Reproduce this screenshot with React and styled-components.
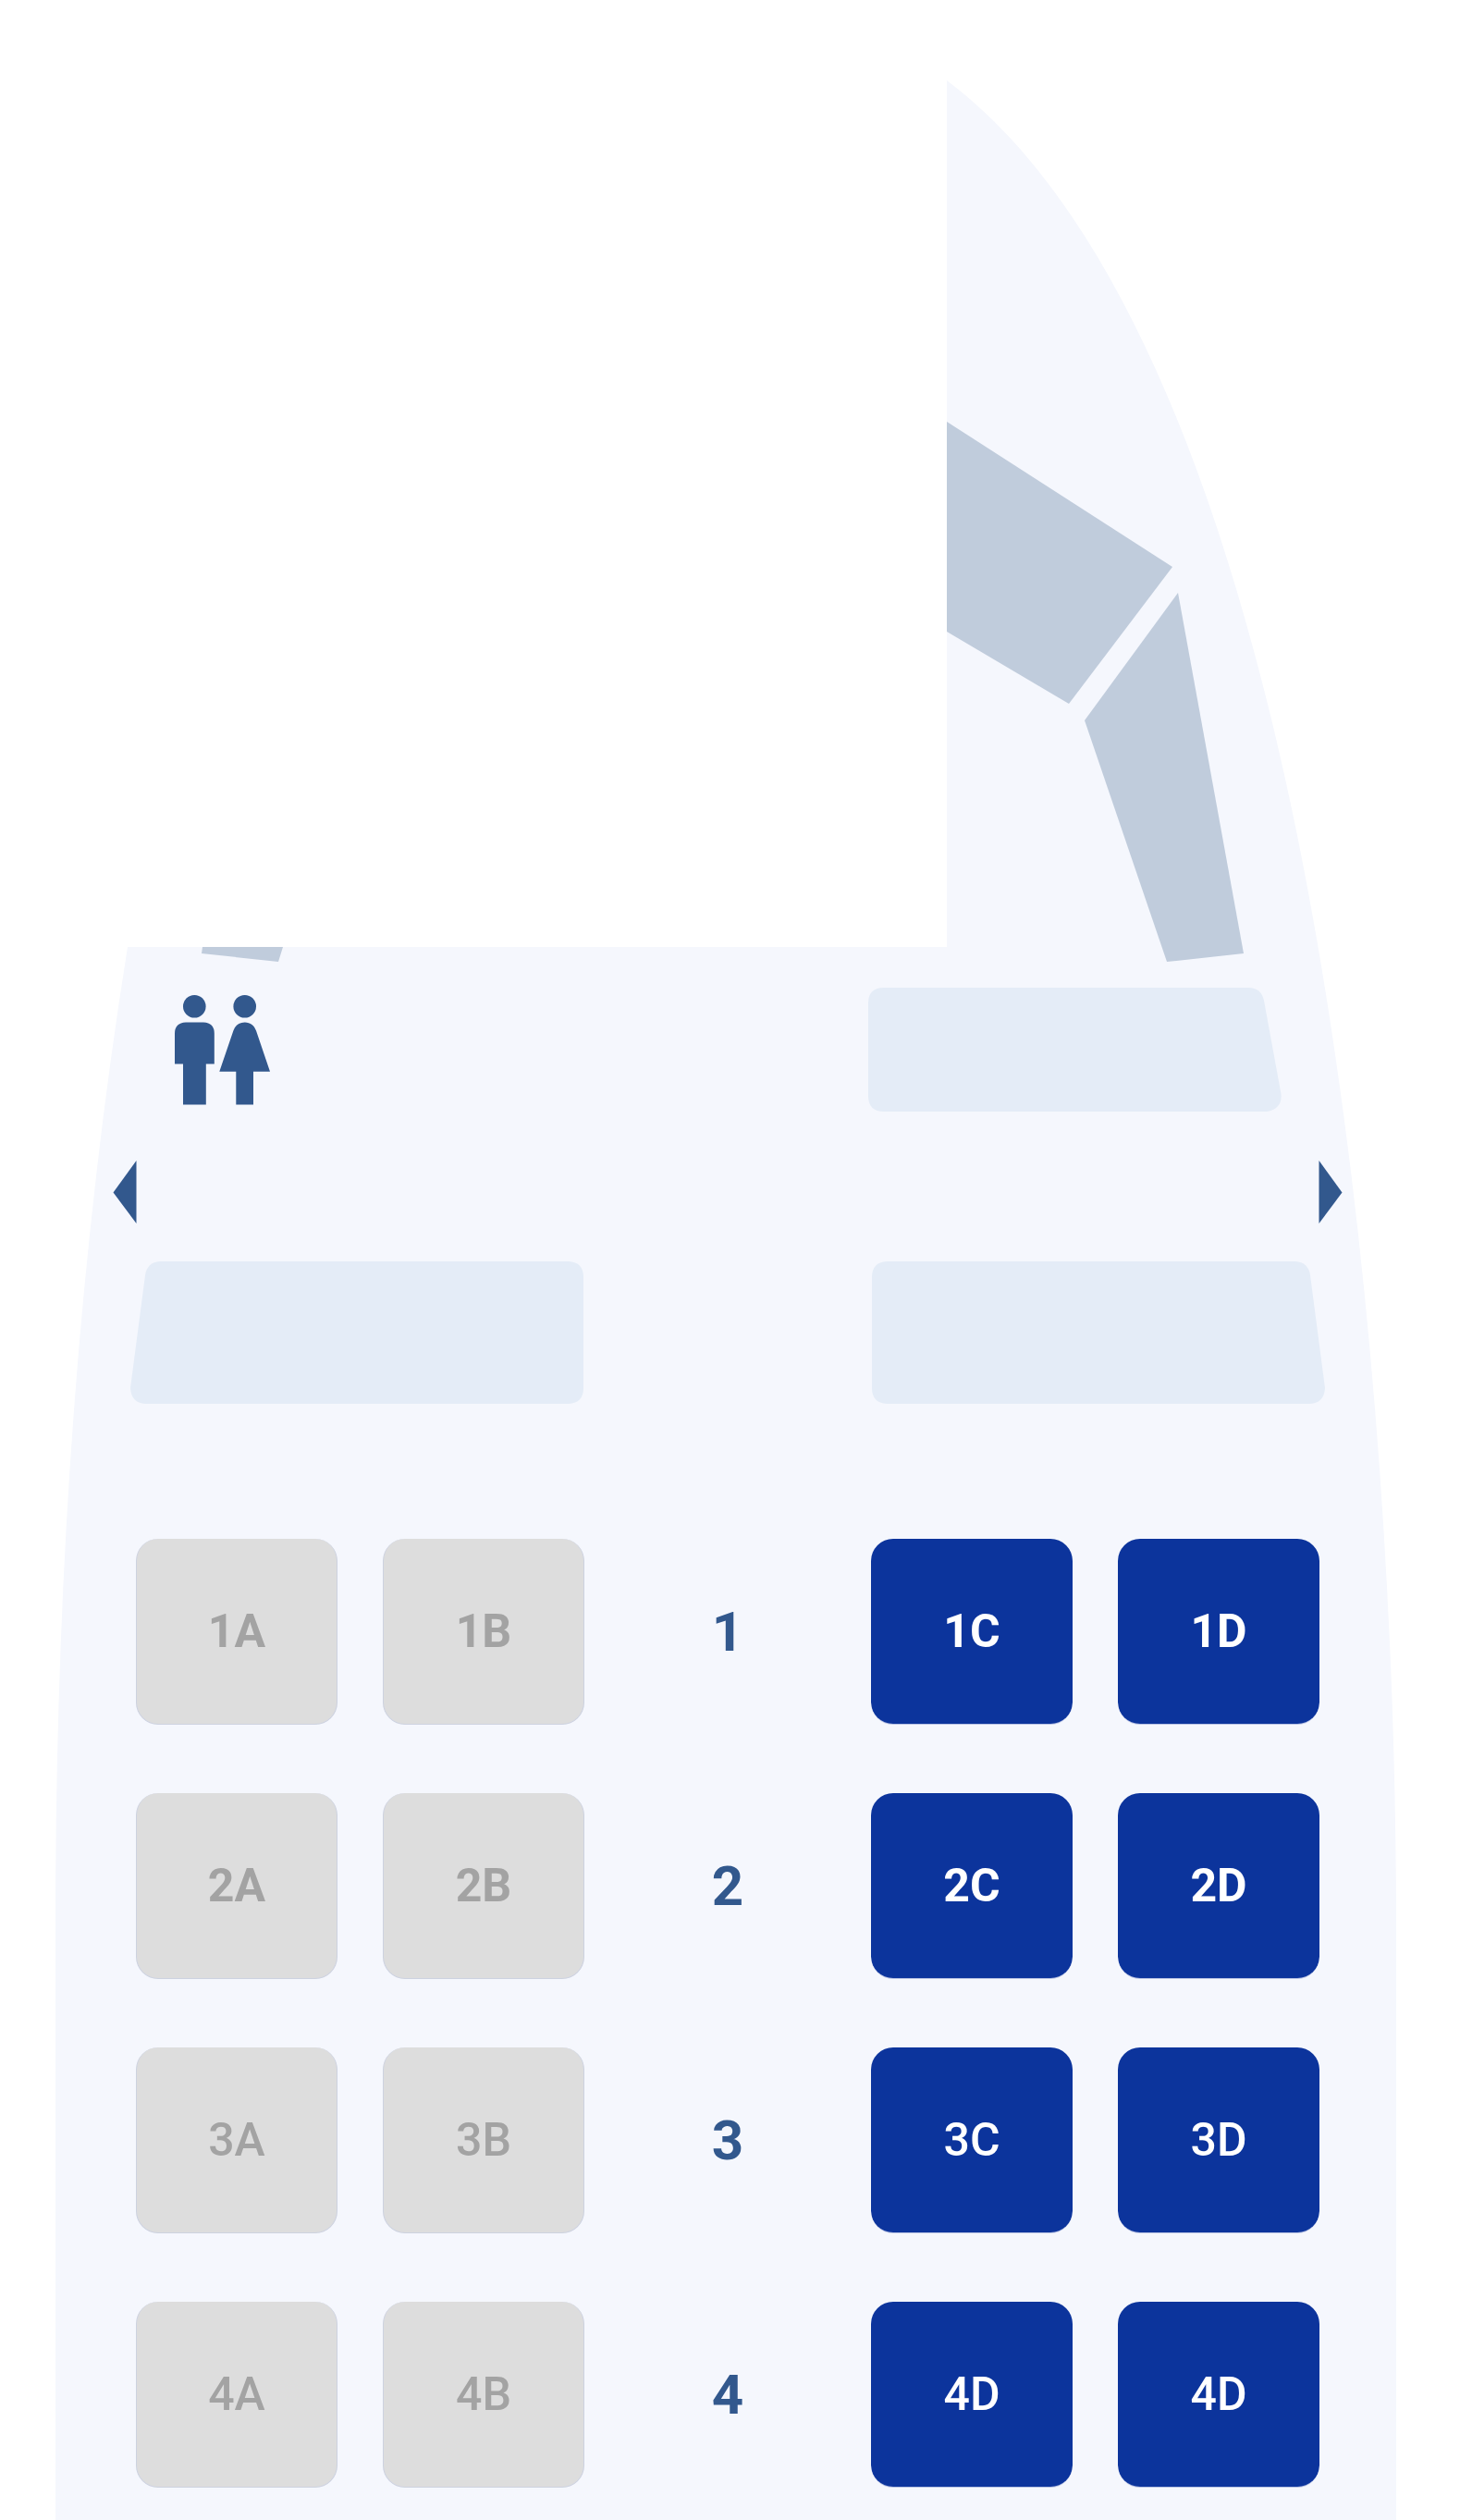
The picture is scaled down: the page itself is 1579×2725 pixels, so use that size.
import React, { useState } from "react";
import styled, { createGlobalStyle } from "styled-components";

const color = {
  page: "#ffffff",
  hull: "#f5f7fd",
  windshield: "#c0ccdc",
  galley: "#e4ecf7",
  ink: "#32588d",
  free: "#0c349c",
  taken: "#dddddd",
  takenText: "#a3a3a3",
  takenEdge: "#cdd2e0",
};

const GlobalStyle = createGlobalStyle`
  body {
    margin: 0;
    background: ${color.page};
    font-family: Roboto, "Liberation Sans", sans-serif;
  }
`;

const Plane = styled.main`
  position: relative;
  isolation: isolate;
  padding: 1068px 0 35px;
`;

const HullDrawing = styled.svg`
  position: absolute;
  inset: 0;
  z-index: -1;
  width: 100%;
  height: 100%;
`;

const FrontRow = styled.div`
  display: flex;
  align-items: center;
  justify-content: space-between;
  padding: 0 193px 0 189px;
`;

const LavatoryIcon = styled.svg`
  flex: none;
  width: 104px;
  height: 119px;
  fill: ${color.ink};
`;

const GalleyShape = styled.svg`
  display: block;
  width: ${(p) => p.$width || "100%"};
  height: ${(p) => p.$height};
  fill: ${color.galley};
`;

const DoorRow = styled.div`
  display: flex;
  justify-content: space-between;
  padding: 53px 127px 41px 122px;
`;

const DoorIcon = styled.svg`
  display: block;
  width: 26px;
  height: 68px;
  fill: ${color.ink};
`;

const GalleyRow = styled.div`
  display: grid;
  grid-template-columns: 1fr 1fr;
  column-gap: 312px;
  padding: 0 146px 0 141px;
`;

const SeatRows = styled.section`
  display: grid;
  gap: 74px;
  padding: 146px 152px 0 147px;
`;

const SeatRow = styled.div`
  display: grid;
  grid-template-columns: 1fr 1fr 212px 1fr 1fr;
  column-gap: 49px;
  align-items: center;
`;

const Seat = styled.button`
  box-sizing: border-box;
  height: 201px;
  padding: 0;
  border: 0 solid transparent;
  border-bottom: 1px solid #b9c3e4;
  border-radius: 24px;
  background: ${color.free};
  color: #ffffff;
  font: ${(p) => p.$weight} 50px/60px Roboto, "Liberation Sans", sans-serif;
  cursor: pointer;

  &:disabled {
    border-color: ${color.takenEdge};
    border-width: 0 1px 1px;
    background: ${color.taken};
    color: ${color.takenText};
    cursor: default;
  }
`;

const RowNumber = styled.span`
  color: ${color.ink};
  font-size: 60px;
  font-weight: 700;
  line-height: 60px;
  text-align: center;
`;

const rows = [
  { number: 1, taken: ["1A", "1B"], free: ["1C", "1D"], weight: 700 },
  { number: 2, taken: ["2A", "2B"], free: ["2C", "2D"], weight: 700 },
  { number: 3, taken: ["3A", "3B"], free: ["3C", "3D"], weight: 500 },
  { number: 4, taken: ["4A", "4B"], free: ["4D", "4D"], weight: 500 },
];

function Hull() {
  return (
    <HullDrawing viewBox="0 0 1579 2725" preserveAspectRatio="none" aria-hidden="true">
      <path
        fill={color.hull}
        d="M1024 87 C1214 229 1320 547 1378 790 C1471 1179 1510 1680 1510 2080 V2725 H60 V2080 C60 1730 82 1374 138 1024 H1024 Z"
      />
      <g fill={color.windshield}>
        <path d="M1024 456 L1268 613 L1156 761 L1024 683 Z" />
        <path d="M1274 641 L1345 1031 L1262 1040 L1173 779 Z" />
        <path d="M219 1024 H306 L301 1040 L218 1031 Z" />
      </g>
    </HullDrawing>
  );
}

function Lavatory() {
  return (
    <LavatoryIcon viewBox="0 0 104 119" role="img" aria-label="Lavatory">
      <circle cx="21.3" cy="12.3" r="12.3" />
      <path d="M12 29.4 H31 Q42.8 30 42.8 41.5 V74.4 H33.8 V118.4 H9 V74.4 H0 V41.5 Q0 30 12 29.4 Z" />
      <circle cx="75.7" cy="12.3" r="12.3" />
      <path d="M75.7 29.4 C82 29.4 86 33 88 38.5 L103 82.8 H85 V118.4 H66.3 V82.8 H48.3 L63.4 38.5 C65.4 33 69.4 29.4 75.7 29.4 Z" />
    </LavatoryIcon>
  );
}

export default function App() {
  const [selected, setSelected] = useState(null);

  return (
    <>
      <GlobalStyle />
      <Plane>
        <Hull />

        <FrontRow>
          <Lavatory />
          <GalleyShape
            $width="447px"
            $height="134px"
            viewBox="0 0 447 134"
            preserveAspectRatio="none"
            aria-hidden="true"
          >
            <path d="M17 0 H411 Q425 0 428 14 L446.500 115 Q448 131 431 134 H17 Q0 134 0 117 V17 Q0 0 17 0 Z" />
          </GalleyShape>
        </FrontRow>

        <DoorRow>
          <DoorIcon viewBox="0 0 26 68" role="img" aria-label="Left door">
            <path d="M25.500 0 V68 L.5 34.500 Z" />
          </DoorIcon>
          <DoorIcon viewBox="0 0 26 68" role="img" aria-label="Right door">
            <path d="M.5 0 V68 L25.500 34.500 Z" />
          </DoorIcon>
        </DoorRow>

        <GalleyRow>
          <GalleyShape $height="154px" viewBox="0 0 490 154" preserveAspectRatio="none" aria-hidden="true">
            <path d="M32 0 H474 Q490 1 490 17 V137 Q490 153 474 154 H16 Q1 153 0 137 L16 15 Q18 1 32 0 Z" />
          </GalleyShape>
          <GalleyShape $height="154px" viewBox="0 0 490 154" preserveAspectRatio="none" aria-hidden="true">
            <path d="M458 0 H16 Q0 1 0 17 V137 Q0 153 16 154 H474 Q489 153 490 137 L474 15 Q472 1 458 0 Z" />
          </GalleyShape>
        </GalleyRow>

        <SeatRows aria-label="Seats">
          {rows.map((row) => (
            <SeatRow key={row.number}>
              {row.taken.map((seat) => (
                <Seat key={seat} type="button" $weight={row.weight} disabled>
                  {seat}
                </Seat>
              ))}
              <RowNumber>{row.number}</RowNumber>
              {row.free.map((seat, i) => {
                const id = `${row.number}-${i}`;
                return (
                  <Seat
                    key={id}
                    type="button"
                    $weight={row.weight}
                    aria-pressed={selected === id}
                    onClick={() => setSelected(id)}
                  >
                    {seat}
                  </Seat>
                );
              })}
            </SeatRow>
          ))}
        </SeatRows>
      </Plane>
    </>
  );
}
